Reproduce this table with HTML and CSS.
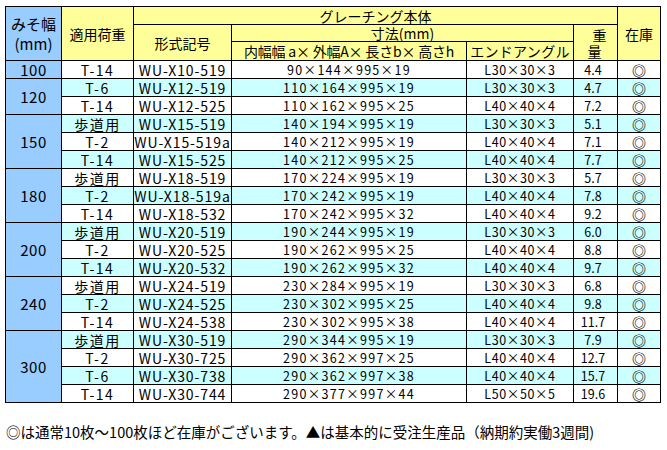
FILE: index.html
```html
<!DOCTYPE html>
<html lang="ja">
<head>
<meta charset="utf-8">
<link rel="stylesheet" href="styles.css">
</head>
<body>
<div class="page">
<table class="spec">
  <colgroup>
    <col class="c1"><col class="c2"><col class="c3"><col class="c4"><col class="c5"><col class="c6"><col class="c7">
  </colgroup>
  <thead>
    <tr class="h1">
      <th rowspan="3" class="hw blue"><span class="hw-l">みそ幅</span><span class="hw-l">(mm)</span></th>
      <th rowspan="3">適用荷重</th>
      <th colspan="4">グレーチング本体</th>
      <th rowspan="3" class="stockh">在庫</th>
    </tr>
    <tr class="h2">
      <th rowspan="2" class="model-h">形式記号</th>
      <th colspan="2">寸法(mm)</th>
      <th rowspan="2" class="wt-h"><span class="wt1">重</span><span class="wt2">量</span></th>
    </tr>
    <tr class="h3">
      <th class="dimh">内幅幅 a× 外幅A× 長さb× 高さh</th>
      <th class="endh">エンドアングル</th>
    </tr>
  </thead>
  <tbody>
    <tr><td class="w blue">100</td><td class="load">T-14</td><td class="model">WU-X10-519</td><td class="dim">90×144×995×19</td><td class="ang">L30×30×3</td><td class="wt">4.4</td><td class="st">◎</td></tr>

    <tr class="cy"><td class="w blue" rowspan="2">120</td><td class="load">T-6</td><td class="model">WU-X12-519</td><td class="dim">110×164×995×19</td><td class="ang">L30×30×3</td><td class="wt">4.7</td><td class="st">◎</td></tr>
    <tr><td class="load">T-14</td><td class="model">WU-X12-525</td><td class="dim">110×162×995×25</td><td class="ang">L40×40×4</td><td class="wt">7.2</td><td class="st">◎</td></tr>

    <tr class="cy"><td class="w blue" rowspan="3">150</td><td class="load">歩道用</td><td class="model">WU-X15-519</td><td class="dim">140×194×995×19</td><td class="ang">L30×30×3</td><td class="wt">5.1</td><td class="st">◎</td></tr>
    <tr><td class="load">T-2</td><td class="model">WU-X15-519a</td><td class="dim">140×212×995×19</td><td class="ang">L40×40×4</td><td class="wt">7.1</td><td class="st">◎</td></tr>
    <tr class="cy"><td class="load">T-14</td><td class="model">WU-X15-525</td><td class="dim">140×212×995×25</td><td class="ang">L40×40×4</td><td class="wt">7.7</td><td class="st">◎</td></tr>

    <tr><td class="w blue" rowspan="3">180</td><td class="load">歩道用</td><td class="model">WU-X18-519</td><td class="dim">170×224×995×19</td><td class="ang">L30×30×3</td><td class="wt">5.7</td><td class="st">◎</td></tr>
    <tr class="cy"><td class="load">T-2</td><td class="model">WU-X18-519a</td><td class="dim">170×242×995×19</td><td class="ang">L40×40×4</td><td class="wt">7.8</td><td class="st">◎</td></tr>
    <tr><td class="load">T-14</td><td class="model">WU-X18-532</td><td class="dim">170×242×995×32</td><td class="ang">L40×40×4</td><td class="wt">9.2</td><td class="st">◎</td></tr>

    <tr class="cy"><td class="w blue" rowspan="3">200</td><td class="load">歩道用</td><td class="model">WU-X20-519</td><td class="dim">190×244×995×19</td><td class="ang">L30×30×3</td><td class="wt">6.0</td><td class="st">◎</td></tr>
    <tr><td class="load">T-2</td><td class="model">WU-X20-525</td><td class="dim">190×262×995×25</td><td class="ang">L40×40×4</td><td class="wt">8.8</td><td class="st">◎</td></tr>
    <tr class="cy"><td class="load">T-14</td><td class="model">WU-X20-532</td><td class="dim">190×262×995×32</td><td class="ang">L40×40×4</td><td class="wt">9.7</td><td class="st">◎</td></tr>

    <tr><td class="w blue" rowspan="3">240</td><td class="load">歩道用</td><td class="model">WU-X24-519</td><td class="dim">230×284×995×19</td><td class="ang">L30×30×3</td><td class="wt">6.8</td><td class="st">◎</td></tr>
    <tr class="cy"><td class="load">T-2</td><td class="model">WU-X24-525</td><td class="dim">230×302×995×25</td><td class="ang">L40×40×4</td><td class="wt">9.8</td><td class="st">◎</td></tr>
    <tr><td class="load">T-14</td><td class="model">WU-X24-538</td><td class="dim">230×302×995×38</td><td class="ang">L40×40×4</td><td class="wt">11.7</td><td class="st">◎</td></tr>

    <tr class="cy"><td class="w blue" rowspan="4">300</td><td class="load">歩道用</td><td class="model">WU-X30-519</td><td class="dim">290×344×995×19</td><td class="ang">L30×30×3</td><td class="wt">7.9</td><td class="st">◎</td></tr>
    <tr><td class="load">T-2</td><td class="model">WU-X30-725</td><td class="dim">290×362×997×25</td><td class="ang">L40×40×4</td><td class="wt">12.7</td><td class="st">◎</td></tr>
    <tr class="cy"><td class="load">T-6</td><td class="model">WU-X30-738</td><td class="dim">290×362×997×38</td><td class="ang">L40×40×4</td><td class="wt">15.7</td><td class="st">◎</td></tr>
    <tr><td class="load">T-14</td><td class="model">WU-X30-744</td><td class="dim">290×377×997×44</td><td class="ang">L50×50×5</td><td class="wt">19.6</td><td class="st">◎</td></tr>
  </tbody>
</table>
<p class="note">◎は通常10枚～100枚ほど在庫がございます。▲は基本的に受注生産品（納期約実働3週間)</p>
</div>
</body>
</html>
```

FILE: styles.css
```css
html, body {
  margin: 0;
  padding: 0;
  background: #ffffff;
}

body {
  font-family: "Noto Sans CJK JP", "Noto Sans", sans-serif;
  color: #000000;
}

.page {
  padding: 6px 0 0 5px;
}

.spec {
  border-collapse: collapse;
  table-layout: fixed;
  width: 655px;
}

.c1 { width: 56px; }
.c2 { width: 72px; }
.c3 { width: 98px; }
.c4 { width: 235px; }
.c5 { width: 107px; }
.c6 { width: 44px; }
.c7 { width: 43px; }

.spec th,
.spec td {
  border: 1px solid #000000;
  padding: 0;
  text-align: center;
  vertical-align: middle;
  font-weight: normal;
  white-space: nowrap;
}

.spec th {
  background: #ffff99;
  font-size: 14px;
  line-height: 14px;
}

.spec th.blue,
.spec td.blue {
  background: #99ccff;
}

.h1 th { height: 17px; }
.h2 th { height: 16px; }
.h3 th { height: 18px; }

.hw-l {
  display: block;
  font-size: 15px;
  line-height: 20px;
}

.model-h {
  padding-top: 4px;
}

.dimh {
  font-size: 14px;
  letter-spacing: -0.2px;
}

.endh {
  font-size: 13px;
  letter-spacing: 0.3px;
}

.wt-h .wt1,
.wt-h .wt2 {
  display: block;
  font-size: 14px;
  line-height: 16px;
}

.wt-h .wt1 { padding-left: 8px; }
.wt-h .wt2 { padding-right: 2px; }

.stockh {
  font-size: 15px;
  padding-bottom: 6px;
}

.spec td {
  height: 17px;
  line-height: 14px;
  background: #ffffff;
  font-size: 13px;
}

.spec tr.cy td {
  background: #ccffff;
}

.spec tr.cy td.blue {
  background: #99ccff;
}

.spec td.w {
  font-size: 15px;
  letter-spacing: 0.5px;
}

.spec td.load {
  font-size: 14px;
  letter-spacing: 1.5px;
}

.spec td.model {
  font-size: 14px;
  letter-spacing: 0.9px;
}

.spec td.dim {
  font-size: 12.5px;
  letter-spacing: 1.3px;
}

.spec td.ang {
  font-size: 12.5px;
  letter-spacing: 0.6px;
}

.spec td.wt {
  font-size: 12.5px;
  padding-right: 5px;
}

.spec td.st {
  font-size: 14px;
  font-weight: bold;
  line-height: 14px;
}

.note {
  margin: 19px 0 0 1px;
  font-size: 14.5px;
  line-height: 20px;
  white-space: nowrap;
}
```
